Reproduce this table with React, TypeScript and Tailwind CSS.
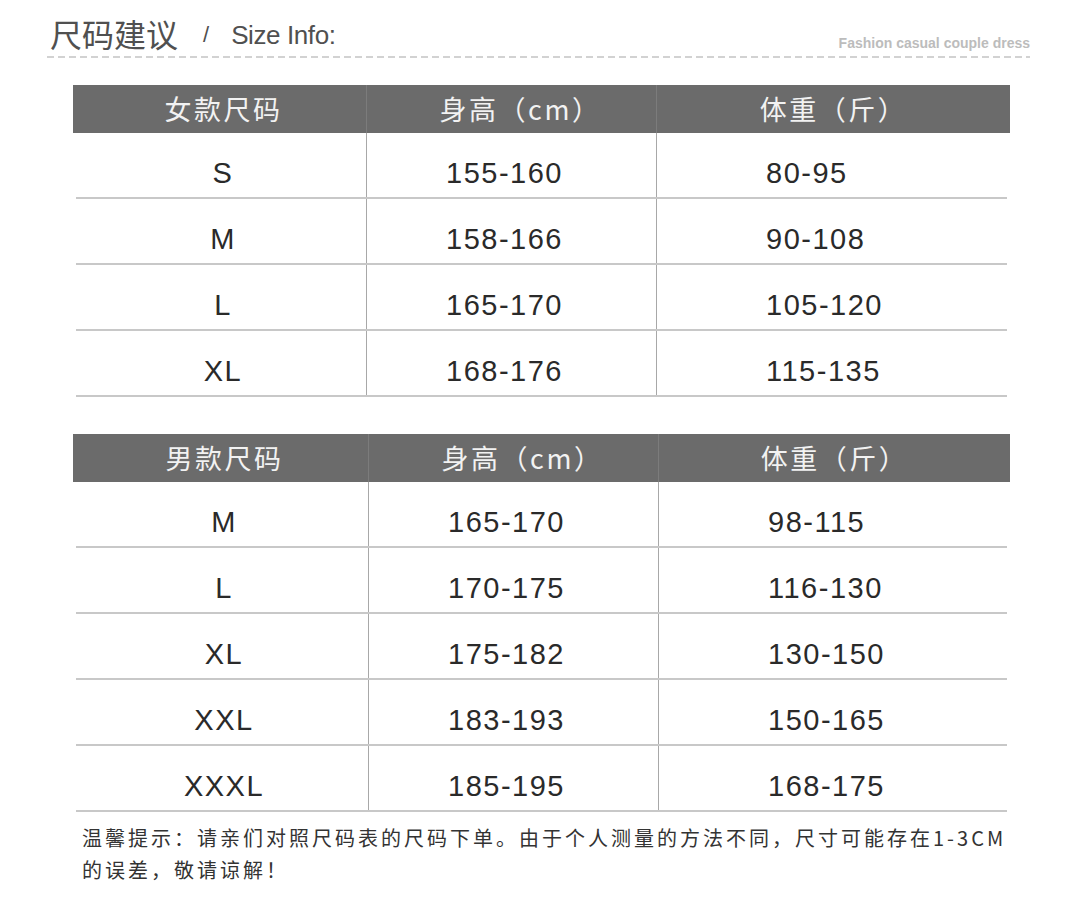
import React from "react";

const CJK = "font-['Noto_Sans_CJK_SC','Noto_Sans',sans-serif]";
const NUM = "font-['Liberation_Sans',Arial,sans-serif]";

type Row = [string, string, string];

const women: Row[] = [
  ["S", "155-160", "80-95"],
  ["M", "158-166", "90-108"],
  ["L", "165-170", "105-120"],
  ["XL", "168-176", "115-135"],
];

const men: Row[] = [
  ["M", "165-170", "98-115"],
  ["L", "170-175", "116-130"],
  ["XL", "175-182", "130-150"],
  ["XXL", "183-193", "150-165"],
  ["XXXL", "185-195", "168-175"],
];

function SizeTable({ title, rows, c1, c2 }: { title: string; rows: Row[]; c1: number; c2: number }) {
  return (
    <div className="w-[937px] ml-[73px]">
      {/* header */}
      <div className={`flex h-[48px] bg-[#6b6b6b] text-[#f2f2f2] text-[27px] tracking-[2.5px] ${CJK}`}>
        <div className="flex items-center justify-center pt-[1px] pl-[8px]" style={{ width: c1 }}>{title}</div>
        <div className="flex items-center justify-center pt-[1px] pl-[18px] border-l border-[#7c7c7c]" style={{ width: c2 }}>身高（cm）</div>
        <div className="flex-1 flex items-center justify-center pt-[1px] border-l border-[#7c7c7c]">体重（斤）</div>
      </div>
      {/* body */}
      <div className="mx-[3px]">
        {rows.map((r, i) => (
          <div
            key={i}
            className={`flex h-[66px] border-b-2 border-[#c8c8c8] text-[29px] tracking-[1.5px] text-[#2a2a2a] ${NUM}`}
          >
            <div className="flex items-center justify-center pt-[18px] pl-[4px]" style={{ width: c1 - 3 }}>{r[0]}</div>
            <div className="flex items-center pl-[79px] pt-[18px] border-l border-[#a8a8a8]" style={{ width: c2 }}>{r[1]}</div>
            <div className="flex-1 flex items-center pl-[109px] pt-[18px] border-l border-[#a8a8a8]">{r[2]}</div>
          </div>
        ))}
      </div>
    </div>
  );
}

export default function App() {
  return (
    <div className="w-[1080px] h-[918px] bg-white overflow-hidden">
      {/* title */}
      <div className="pt-[13px] pl-[47px] pr-[50px]">
        <div className="flex items-end justify-between">
          <div className="flex items-end pl-[3px]">
            <span className={`text-[32px] leading-[40px] text-[#505050] ${CJK}`}>尺码建议</span>
            <span className={`ml-[25px] mb-[4px] text-[22px] leading-[28px] text-[#505050] ${NUM}`}>/</span>
            <span className={`ml-[22px] mb-[4px] text-[26px] leading-[28px] text-[#505050] tracking-[-0.4px] ${NUM}`}>Size Info:</span>
          </div>
          <span className={`mb-[1px] text-[14px] leading-[18px] font-bold text-[#bcbcbc] ${NUM}`}>Fashion casual couple dress</span>
        </div>
        <div className="mt-[3px] h-[2px] bg-[repeating-linear-gradient(90deg,#d2d2d2_0_7px,transparent_7px_11px)]" />
      </div>

      <div className="mt-[27px]">
        <SizeTable title="女款尺码" rows={women} c1={293} c2={290} />
      </div>
      <div className="mt-[37px]">
        <SizeTable title="男款尺码" rows={men} c1={295} c2={290} />
      </div>

      <p className={`mt-[10px] ml-[82px] text-[20px] leading-[32px] tracking-[3px] text-[#333] ${CJK}`}>
        温馨提示：请亲们对照尺码表的尺码下单。由于个人测量的方法不同，尺寸可能存在1-3CM
        <br />
        的误差，敬请谅解！
      </p>
    </div>
  );
}
